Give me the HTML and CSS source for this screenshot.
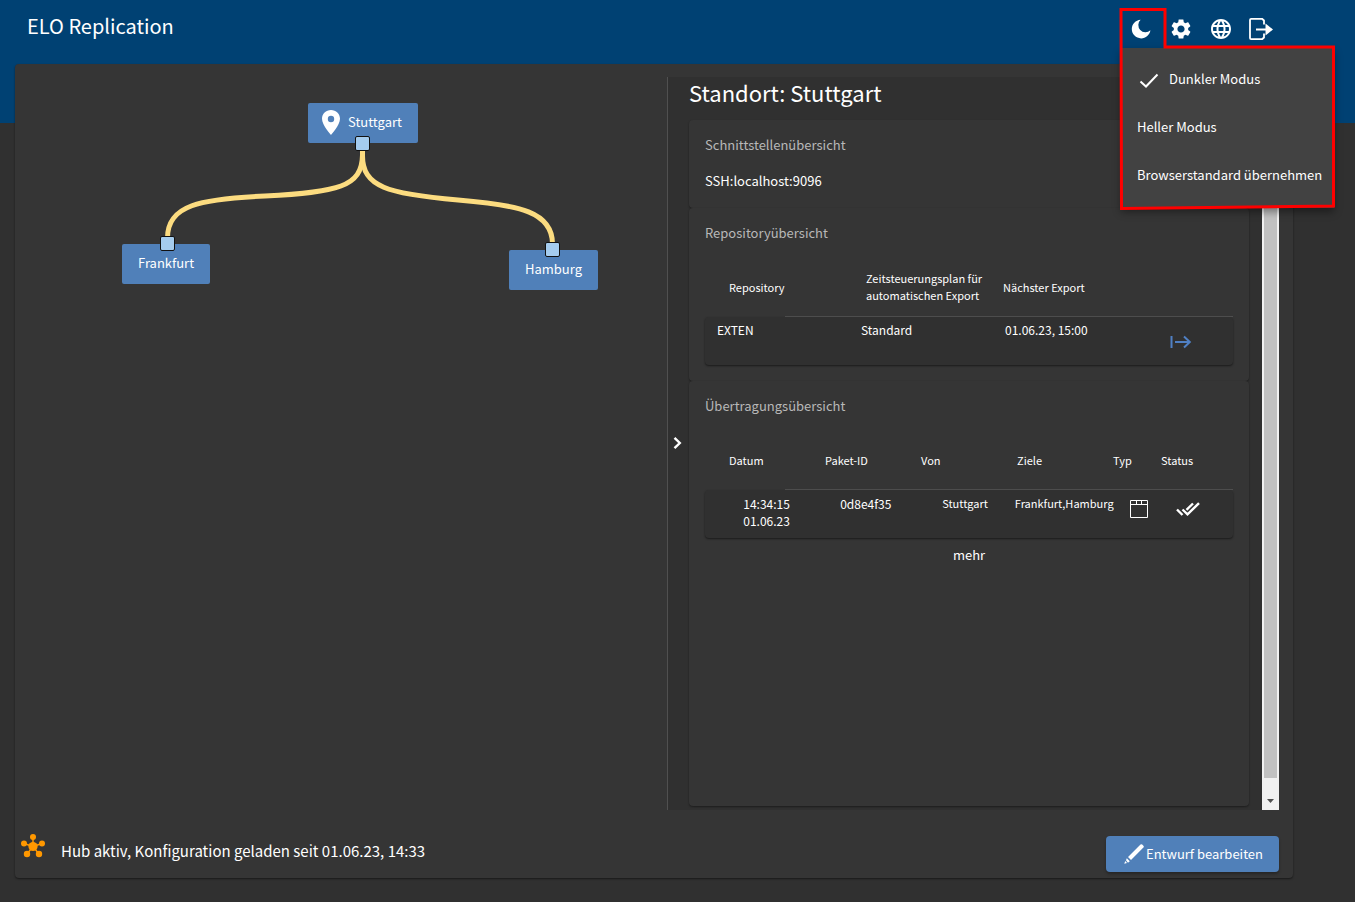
FILE: index.html
```html
<!DOCTYPE html>
<html lang="de">
<head>
<meta charset="utf-8">
<meta name="viewport" content="width=device-width, initial-scale=1">
<title>ELO Replication</title>
<link rel="stylesheet" href="styles.css">
</head>
<body>
<div class="page">
  <header class="topbar">
    <h1 class="brand">ELO Replication</h1>
    <nav class="tools" aria-label="Werkzeuge">
      <div class="mode">
        <button class="tool" type="button" aria-label="Farbmodus" aria-expanded="true">
          <svg width="24" height="24" viewBox="0 0 24 24"><path fill="#fff" d="M11.600 2.800C6.600 3.200 2.800 7.200 2.800 12.100c0 5.200 4.200 9.300 9.300 9.300 4.700 0 8.700-3.500 9.300-8.100a5.900 5.900 0 0 1-9.800-10.500z"/></svg>
        </button>
        <div class="menu" role="menu">
          <button class="menu-item" type="button" role="menuitem">
            <svg class="menu-check" width="24" height="24" viewBox="0 0 24 24"><path fill="none" stroke="#fff" stroke-width="2" d="M3.500 14.500 9 19.500 20.500 7.500"/></svg>
            Dunkler Modus
          </button>
          <button class="menu-item" type="button" role="menuitem">Heller Modus</button>
          <button class="menu-item" type="button" role="menuitem">Browserstandard übernehmen</button>
        </div>
        <svg class="highlight" width="218" height="203" viewBox="0 0 218 203" aria-hidden="true"><path fill="none" stroke="#f00" stroke-width="3" d="M3 2.500H47V40H215.500V199L3.500 201.500z"/></svg>
      </div>
      <button class="tool" type="button" aria-label="Einstellungen">
        <svg width="24" height="24" viewBox="0 0 24 24"><path fill="#fff" d="M19.140 12.940c.04-.3.060-.61.060-.94 0-.32-.02-.64-.07-.94l2.030-1.580c.18-.14.230-.41.120-.61l-1.920-3.320c-.12-.22-.37-.29-.59-.22l-2.390.96c-.5-.38-1.030-.7-1.620-.94l-.36-2.540c-.04-.24-.24-.41-.48-.41h-3.840c-.24 0-.43.170-.47.410l-.36 2.540c-.59.240-1.130.570-1.620.940l-2.390-.96c-.22-.08-.47 0-.59.220L2.740 8.870c-.12.210-.08.470.120.610l2.030 1.580c-.05.300-.09.630-.09.940s.02.640.070.940l-2.030 1.580c-.18.140-.23.410-.12.610l1.920 3.320c.12.220.37.290.59.220l2.390-.96c.5.380 1.030.7 1.620.940l.36 2.540c.05.240.24.410.48.410h3.840c.24 0 .44-.17.470-.41l.36-2.540c.59-.24 1.130-.56 1.620-.94l2.390.96c.22.080.47 0 .59-.22l1.920-3.320c.12-.22.070-.47-.12-.61l-2.010-1.580zM12 15.600c-1.980 0-3.600-1.620-3.600-3.600s1.620-3.600 3.600-3.600 3.600 1.620 3.600 3.600-1.620 3.600-3.600 3.600z"/></svg>
      </button>
      <button class="tool" type="button" aria-label="Sprache">
        <svg width="24" height="24" viewBox="0 0 24 24"><path fill="#fff" d="M11.990 2C6.470 2 2 6.480 2 12s4.470 10 9.990 10C17.520 22 22 17.520 22 12S17.520 2 11.990 2zm6.930 6h-2.950c-.32-1.250-.78-2.450-1.380-3.560 1.840.63 3.370 1.910 4.330 3.560zM12 4.040c.83 1.200 1.480 2.530 1.910 3.960h-3.820c.43-1.430 1.080-2.760 1.910-3.960zM4.260 14C4.100 13.360 4 12.690 4 12s.1-1.360.26-2h3.380c-.08.660-.14 1.320-.14 2s.06 1.340.14 2H4.260zm.82 2h2.950c.32 1.250.78 2.450 1.380 3.560-1.840-.63-3.370-1.900-4.330-3.560zm2.950-8H5.080c.96-1.660 2.490-2.930 4.330-3.560C8.810 5.550 8.350 6.750 8.030 8zM12 19.960c-.83-1.200-1.480-2.530-1.910-3.960h3.820c-.43 1.430-1.080 2.760-1.910 3.960zM14.340 14H9.660c-.09-.66-.16-1.320-.16-2s.07-1.350.16-2h4.680c.09.650.16 1.320.16 2s-.07 1.340-.16 2zm.25 5.560c.6-1.110 1.060-2.310 1.380-3.560h2.950c-.96 1.650-2.490 2.930-4.330 3.560zM16.360 14c.08-.66.140-1.320.14-2s-.06-1.340-.14-2h3.380c.16.640.26 1.310.26 2s-.1 1.360-.26 2h-3.380z"/></svg>
      </button>
      <button class="tool" type="button" aria-label="Abmelden">
        <svg width="26" height="24" viewBox="0 0 26 24"><path fill="none" stroke="#fff" stroke-width="1.800" stroke-linejoin="round" d="M16 7.500V3.500L14 1.800H3.200Q2 1.800 2 3V21Q2 22.200 3.200 22.200H14L16 20.500V16.500"/><path fill="none" stroke="#fff" stroke-width="2" d="M8 12.500H18"/><path fill="#fff" d="M17.500 6.500 25 12.500 17.500 18.500z"/></svg>
      </button>
    </nav>
  </header>

  <main class="card">
    <div class="content">
      <section class="graph" aria-label="Standorte">
        <svg class="edges" width="600" height="240" viewBox="0 0 600 240" aria-hidden="true"><g transform="translate(-15 -77)" fill="none" stroke="#fcdc80" stroke-width="5"><path d="M362.500 143V155C362 187 338 192 265 196C200 199 167.500 205 167.500 238V244"/><path d="M362.500 143V155C362 187 388 194 458 200C520 205 552.500 212 552.500 244V250"/></g></svg>
        <button class="node node-stuttgart" type="button">
          <svg class="pin" width="18" height="25" viewBox="0 0 18 25"><path fill="#fff" fill-rule="evenodd" d="M9 0C4 0 0 3.900 0 8.800 0 15.400 9 25 9 25s9-9.600 9-16.200C18 3.900 14 0 9 0zm0 12.200a3.200 3.200 0 1 1 0-6.400 3.200 3.200 0 0 1 0 6.400z"/></svg>
          Stuttgart<span class="port port-bottom"></span>
        </button>
        <button class="node node-frankfurt" type="button">Frankfurt<span class="port port-top"></span></button>
        <button class="node node-hamburg" type="button">Hamburg<span class="port port-top"></span></button>
      </section>

      <aside class="panel">
        <button class="collapse" type="button" aria-label="Bereich einklappen">
          <svg width="9" height="14" viewBox="0 0 9 14"><path fill="none" stroke="#fff" stroke-width="2.400" d="M1.500 1.800 6.800 7 1.500 12.200"/></svg>
        </button>
        <div class="details">
          <h2 class="site">Standort: Stuttgart</h2>
          <section class="box">
            <h3 class="box-title">Schnittstellenübersicht</h3>
            <p class="endpoint">SSH:localhost:9096</p>
          </section>
          <section class="box">
            <h3 class="box-title">Repositoryübersicht</h3>
            <table class="grid repos">
              <thead><tr><th>Repository</th><th>Zeitsteuerungsplan für automatischen Export</th><th>Nächster Export</th></tr></thead>
              <tbody><tr><td>EXTEN</td><td>Standard</td><td>01.06.23, 15:00</td>
                <td class="icon-cell"><button class="plain" type="button" aria-label="Export starten"><svg width="22" height="14" viewBox="0 0 22 14"><path fill="none" stroke="#5080c4" stroke-width="2" d="M1.500 1V13M5 7H20M14 1.500 19.800 7 14 12.500"/></svg></button></td></tr></tbody>
            </table>
          </section>
          <section class="box box-last">
            <h3 class="box-title">Übertragungsübersicht</h3>
            <table class="grid transfers">
              <thead><tr><th>Datum</th><th>Paket-ID</th><th>Von</th><th>Ziele</th><th>Typ</th><th>Status</th></tr></thead>
              <tbody><tr><td>14:34:15<br>01.06.23</td><td>0d8e4f35</td><td class="place">Stuttgart</td><td class="place">Frankfurt,Hamburg</td>
                <td class="icon-cell"><svg width="18" height="18" viewBox="0 0 18 18" role="img" aria-label="Paket"><path fill="none" stroke="#fff" d="M.5.5H17.500V17.500H.5zM.5 4.500H17.500M6.500.5V4.500M11.500.5V4.500"/></svg></td>
                <td class="icon-cell"><svg width="24" height="14" viewBox="0 0 24 14" role="img" aria-label="Abgeschlossen"><path fill="none" stroke="#fff" stroke-width="2.400" d="M1 7.500 6.500 13M6.500 7.500 11.500 12.300 23 1.200M10.500 7.800 17 1.500"/></svg></td></tr></tbody>
            </table>
            <button class="plain more" type="button">mehr</button>
          </section>
        </div>
        <div class="scrollbar" aria-hidden="true">
          <div class="thumb"></div>
          <svg width="17" height="17" viewBox="0 0 17 17"><path fill="#505050" d="M5 6H12L8.500 10z"/></svg>
        </div>
      </aside>
    </div>

    <footer class="status">
      <svg class="hub" width="24" height="24" viewBox="0 0 24 24" aria-hidden="true"><g fill="#ff9800"><circle cx="12" cy="12.500" r="4.600"/><circle cx="12" cy="3" r="3"/><circle cx="3" cy="9.500" r="3"/><circle cx="21" cy="9.500" r="3"/><circle cx="6" cy="20" r="3.200"/><circle cx="18" cy="20" r="3.200"/></g><path fill="none" stroke="#ff9800" stroke-width="1.500" d="M12 12.500V3M12 12.500 3 9.500M12 12.500 21 9.500M12 12.500 6 20M12 12.500 18 20"/></svg>
      <p class="status-text">Hub aktiv, Konfiguration geladen seit 01.06.23, 14:33</p>
      <button class="edit" type="button">
        <svg width="20" height="20" viewBox="0 0 20 20"><path fill="#fff" d="M16.500.6a1.200 1.200 0 0 1 1.700 0l1.200 1.200a1.200 1.200 0 0 1 0 1.700L7 16 4 13zM2.800 14.200 5.800 17.200 4 18.700 2 16.200zM1.200 17 3 19 .3 19.800z"/></svg>
        Entwurf bearbeiten
      </button>
    </footer>
  </main>
</div>
</body>
</html>
```
FILE: styles.css
```css
* {
  box-sizing: border-box;
}

body {
  margin: 0;
  background: #303030;
  color: #fff;
  font: 400 13px/18px "Noto Sans CJK SC", "Noto Sans", sans-serif;
}

h1, h2, h3, p {
  margin: 0;
}

button {
  border: 0;
  padding: 0;
  background: none;
  color: inherit;
  font: inherit;
  cursor: pointer;
}

svg {
  display: block;
  flex: none;
}

.page {
  display: flex;
  flex-direction: column;
  min-height: 100vh;
  padding: 0 62px 24px 15px;
  background: linear-gradient(#004173, #004173) top / 100% 123px no-repeat;
}

/* Top bar */
.topbar {
  display: flex;
  justify-content: space-between;
  height: 64px;
  padding: 9px 12px 0;
}

.brand {
  font-size: 20px;
  font-weight: 400;
  line-height: 34px;
}

.tools {
  display: flex;
}

.tool {
  display: flex;
  align-items: center;
  justify-content: center;
  width: 40px;
  height: 40px;
}

.mode {
  position: relative;
}

.menu {
  position: absolute;
  z-index: 2;
  top: 39px;
  left: 0;
  padding: 8px 0;
  background: #424242;
  box-shadow: 0 4px 8px rgba(0, 0, 0, .4);
}

.menu-item {
  display: flex;
  align-items: center;
  gap: 8px;
  width: 100%;
  height: 48px;
  padding: 0 12px 2px 16px;
  white-space: nowrap;
}

.highlight {
  position: absolute;
  z-index: 3;
  top: -2px;
  left: -3px;
  pointer-events: none;
}

/* Main card */
.card {
  display: flex;
  flex: 1;
  flex-direction: column;
  padding-top: 13px;
  border-radius: 4px;
  background: #353535;
  box-shadow: 0 1px 2px rgba(0, 0, 0, .5);
}

.content {
  display: grid;
  flex: 1;
  grid-template-columns: 652fr 612fr;
  padding-right: 14px;
}

/* Site graph */
.graph {
  position: relative;
}

.edges {
  position: absolute;
  top: 0;
  left: 0;
}

.node {
  position: absolute;
  display: flex;
  align-items: center;
  height: 40px;
  padding: 0 16px 2px;
  border-radius: 2px;
  background: #5080b9;
}

.node-stuttgart {
  top: 26px;
  left: 293px;
  padding-left: 14px;
}

.pin {
  margin-right: 8px;
}

.node-frankfurt {
  top: 167px;
  left: 107px;
}

.node-hamburg {
  top: 173px;
  left: 494px;
}

.port {
  position: absolute;
  left: calc(50% - 8px);
  width: 15px;
  height: 15px;
  border: 1px solid #111;
  border-radius: 2px;
  background: #a5ccee;
}

.node-frankfurt .port {
  left: calc(50% - 6px);
}

.port-top {
  top: -8px;
}

.port-bottom {
  bottom: -8px;
}

/* Detail panel */
.panel {
  display: flex;
  border-left: 1px solid #505050;
  background: #303030;
}

.collapse {
  display: flex;
  align-items: center;
  justify-content: center;
  width: 21px;
  padding: 0 2px 2px 0;
}

.details {
  display: flex;
  flex: 1;
  flex-direction: column;
  margin-right: 13px;
  padding-bottom: 4px;
}

.site {
  margin-bottom: 13px;
  font-size: 22px;
  font-weight: 400;
  line-height: 30px;
}

.box {
  padding: 16px;
  border-radius: 4px;
  background: #353535;
  box-shadow: 0 1px 2px rgba(0, 0, 0, .4);
}

.box-last {
  flex: 1;
}

.box-title {
  margin-bottom: 18px;
  color: #b8b8b8;
  font-size: 13px;
  font-weight: 400;
  line-height: 18px;
}

.endpoint {
  padding-bottom: 2px;
}

.grid,
.grid thead,
.grid tbody {
  display: block;
}

.grid {
  font-size: 12px;
  line-height: 17px;
}

.grid tr {
  display: grid;
}

.grid th,
.grid td {
  padding: 0;
  font-weight: 400;
}

.grid th {
  font-size: 11px;
  text-align: left;
}

.grid thead tr {
  align-items: center;
  height: 57px;
  padding: 0 0 3px 24px;
  background: linear-gradient(#505050, #505050) right bottom / calc(100% - 80px) 1px no-repeat;
}

.grid tbody tr {
  height: 48px;
  padding: 4px 20px 0 12px;
  border-radius: 4px;
  background: #303030;
  box-shadow: 0 1px 2px rgba(0, 0, 0, .5);
}

.grid .icon-cell {
  display: flex;
  align-items: center;
  justify-content: center;
  padding-bottom: 2px;
}

.repos thead tr {
  grid-template-columns: 137fr 137fr 230fr;
}

.repos tbody tr {
  grid-template-columns: 144fr 144fr 144fr 64fr;
}

.repos th {
  padding-right: 16px;
}

.transfers thead tr {
  grid-template-columns: 2fr 2fr 2fr 2fr 1fr 1fr;
  padding-right: 24px;
}

.grid.transfers tbody tr {
  grid-template-columns: repeat(4, minmax(0, 2fr)) repeat(2, minmax(0, 1fr));
  padding-top: 5px;
  text-align: center;
}

.transfers .place {
  font-size: 11px;
}

.grid.transfers .icon-cell {
  padding-bottom: 16px;
}

.plain {
  display: block;
}

.more {
  margin: 8px auto 0;
}

.scrollbar {
  display: flex;
  flex-direction: column;
  width: 17px;
  padding-top: 17px;
  background: #f1f1f1;
}

.thumb {
  flex: 1;
  margin: 0 2px 15px;
  background: #c1c1c1;
}

/* Status line */
.status {
  display: flex;
  align-items: flex-start;
  padding: 24px 14px 6px 6px;
}

.status-text {
  flex: 1;
  margin-left: 16px;
  font-size: 15px;
  line-height: 34px;
}

.edit {
  display: flex;
  align-items: center;
  gap: 2px;
  height: 36px;
  margin-top: 2px;
  padding: 0 16px 0 18px;
  border-radius: 4px;
  background: #5080b9;
  box-shadow: 0 2px 3px rgba(0, 0, 0, .3);
}
```
